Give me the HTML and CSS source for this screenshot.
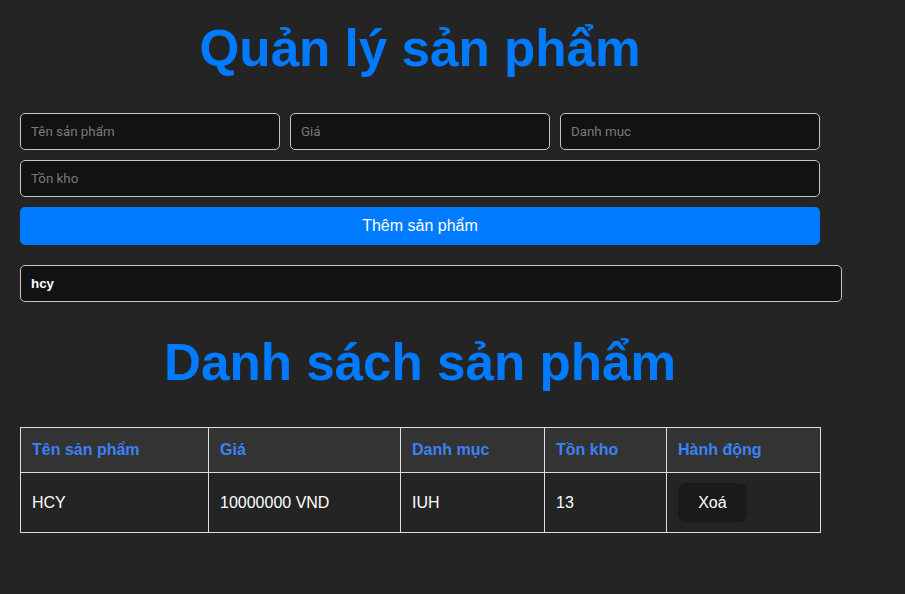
FILE: index.html
```html
<!DOCTYPE html>
<html lang="vi">
<head>
<meta charset="utf-8">
<title>Quản lý sản phẩm</title>
<link rel="stylesheet" href="styles.css">
</head>
<body>
<div class="app">
  <h1 class="title">Quản lý sản phẩm</h1>
  <form class="form">
    <div class="row three">
      <input class="field" type="text" placeholder="Tên sản phẩm">
      <input class="field" type="text" placeholder="Giá">
      <input class="field" type="text" placeholder="Danh mục">
    </div>
    <div class="row">
      <input class="field" type="text" placeholder="Tồn kho">
    </div>
    <button class="add-btn" type="button">Thêm sản phẩm</button>
  </form>
  <input class="search" type="text" value="hcy">
  <h1 class="title list-title">Danh sách sản phẩm</h1>
  <table class="table">
    <colgroup>
      <col class="c1"><col class="c2"><col class="c3"><col class="c4"><col class="c5">
    </colgroup>
    <thead>
      <tr>
        <th>Tên sản phẩm</th>
        <th>Giá</th>
        <th>Danh mục</th>
        <th>Tồn kho</th>
        <th>Hành động</th>
      </tr>
    </thead>
    <tbody>
      <tr>
        <td>HCY</td>
        <td>10000000 VND</td>
        <td>IUH</td>
        <td>13</td>
        <td><button class="del-btn" type="button">Xoá</button></td>
      </tr>
    </tbody>
  </table>
</div>
</body>
</html>
```
FILE: styles.css
```css
html, body {
  margin: 0;
  padding: 0;
  background: #242424;
}
body {
  font-family: "Liberation Sans", Arial, sans-serif;
  font-size: 16px;
  line-height: 1.5;
  color: #ffffff;
}
.app {
  width: 800px;
  margin-left: 20px;
  padding-top: 21px;
}
.title {
  margin: 0 0 36px;
  font-size: 51.2px;
  line-height: 56px;
  font-weight: bold;
  color: #007bff;
  text-align: center;
}
.form {
  display: flex;
  flex-direction: column;
  gap: 10px;
}
.row {
  display: flex;
  gap: 10px;
}
.field {
  flex: 1;
  min-width: 0;
  height: 37px;
  box-sizing: border-box;
  margin: 0;
  padding: 0 10px;
  border: 1px solid #c4c4c4;
  border-radius: 5px;
  background: #121212;
  color: #ffffff;
  font-family: Roboto, "Liberation Sans", sans-serif;
  font-size: 13.33px;
  outline: none;
}
.field::placeholder {
  color: #7a7a7a;
}
.add-btn {
  height: 38px;
  margin: 0;
  border: none;
  border-radius: 5px;
  background: #007bff;
  color: #ffffff;
  font-family: "Liberation Sans", Arial, sans-serif;
  font-size: 16px;
  cursor: pointer;
}
.search {
  display: block;
  width: 822px;
  height: 37px;
  box-sizing: border-box;
  margin: 20px 0 33px;
  padding: 0 10px;
  border: 1px solid #c4c4c4;
  border-radius: 5px;
  background: #121212;
  color: #ffffff;
  font-family: "Liberation Sans", Arial, sans-serif;
  font-size: 13.33px;
  font-weight: bold;
  outline: none;
}
.table {
  width: 800px;
  border-collapse: collapse;
  table-layout: fixed;
}
.c1 { width: 188px; }
.c2 { width: 192px; }
.c3 { width: 144px; }
.c4 { width: 122px; }
.c5 { width: 154px; }
.table th,
.table td {
  border: 1px solid #dddddd;
  padding: 10px 10px 10px 11px;
  text-align: left;
  vertical-align: middle;
}
.table th {
  background: #333333;
  color: #3b82f6;
  font-weight: bold;
}
.table td {
  color: #ffffff;
}
.del-btn {
  margin: 0;
  padding: 9.6px 19.2px;
  border: 1px solid transparent;
  border-radius: 8px;
  background: #1a1a1a;
  color: #ffffff;
  font-family: "Liberation Sans", Arial, sans-serif;
  font-size: 16px;
  line-height: normal;
  cursor: pointer;
}
```
